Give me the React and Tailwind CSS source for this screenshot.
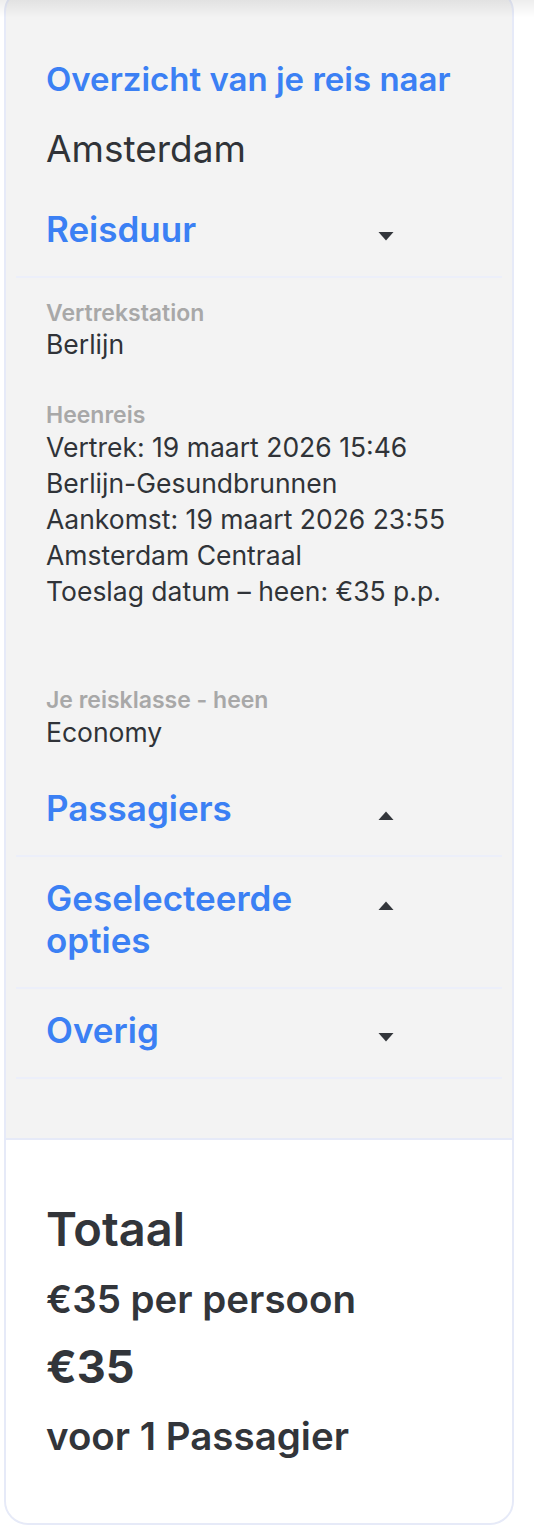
import React from "react";

const Caret = ({ up }) => (
  <svg width="16" height="9" viewBox="0 0 16 9" className="block">
    {up ? <path d="M8 0.5 L15.5 9 H0.5 Z" fill="#33363b" /> : <path d="M0.5 0 H15.5 L8 8.5 Z" fill="#33363b" />}
  </svg>
);

const SectionHeader = ({ title, up, first }) => (
  <div className={`mx-[10px] border-b-2 border-[#eceffa] px-[30px] ${first ? "pt-0" : "pt-[20px]"} pb-[26px]`}>
    <div className="flex items-start justify-between pr-[78px]">
      <h3 className="w-[300px] text-[35px] font-semibold leading-[42px] text-[#3b80f4]">{title}</h3>
      <div className="mt-[24px]">
        <Caret up={up} />
      </div>
    </div>
  </div>
);

const Field = ({ label, children, className = "" }) => (
  <div className={className}>
    <p className="text-[23px] font-semibold leading-[28px] text-[#a8a8a8]">{label}</p>
    <div className="text-[26.5px] leading-[36px] text-[#303338]">{children}</div>
  </div>
);

export default function App() {
  return (
    <div
      className="relative min-h-[1540px] overflow-hidden bg-white"
      style={{ fontFamily: "Inter, 'Noto Sans', sans-serif" }}
    >
      {/* shadow from the header above */}
      <div className="pointer-events-none absolute inset-x-0 top-0 z-10 h-[18px] bg-gradient-to-b from-black/[0.07] to-transparent" />

      <div className="ml-[4px] mt-[-12px] w-[510px] overflow-hidden rounded-[24px] border-2 border-[#e6eaf8] bg-[#f3f3f3]">
        {/* intro */}
        <div className="px-[40px] pt-[69px]">
          <h2 className="text-[33px] font-semibold leading-[40px] text-[#3b80f4]">Overzicht van je reis naar</h2>
          <p className="mt-[28px] text-[37px] leading-[44px] text-[#303338]">Amsterdam</p>
        </div>

        <div className="mt-[37px]">
          <SectionHeader title="Reisduur" first />
        </div>

        {/* reisduur content */}
        <div className="px-[40px] pt-[21px]">
          <Field label="Vertrekstation">
            <p className="leading-[34px]">Berlijn</p>
          </Field>
          <Field label="Heenreis" className="mt-[40px]">
            <p>Vertrek: 19 maart 2026 15:46</p>
            <p>Berlijn-Gesundbrunnen</p>
            <p>Aankomst: 19 maart 2026 23:55</p>
            <p>Amsterdam Centraal</p>
            <p>Toeslag datum – heen: €35 p.p.</p>
          </Field>
          <Field label="Je reisklasse - heen" className="mt-[77px]">
            <p className="mt-[1px] leading-[34px]">Economy</p>
          </Field>
        </div>

        <div className="mt-[18px]">
          <SectionHeader title="Passagiers" up />
          <SectionHeader title="Geselecteerde opties" up />
          <SectionHeader title="Overig" />
        </div>

        <div className="h-[59px]" />

        {/* totals */}
        <div className="border-t-2 border-[#e6eaf8] bg-white px-[40px] pb-[63px] pt-[61px] text-[#32353a]">
          <p className="text-[47px] font-semibold leading-[56px]">Totaal</p>
          <p className="mt-[18px] text-[38.5px] font-semibold leading-[48px]">€35 per persoon</p>
          <p className="mt-[16px] text-[45px] font-bold leading-[56px]">€35</p>
          <p className="mt-[17px] text-[38.5px] font-semibold leading-[48px]">voor 1 Passagier</p>
        </div>
      </div>
    </div>
  );
}
